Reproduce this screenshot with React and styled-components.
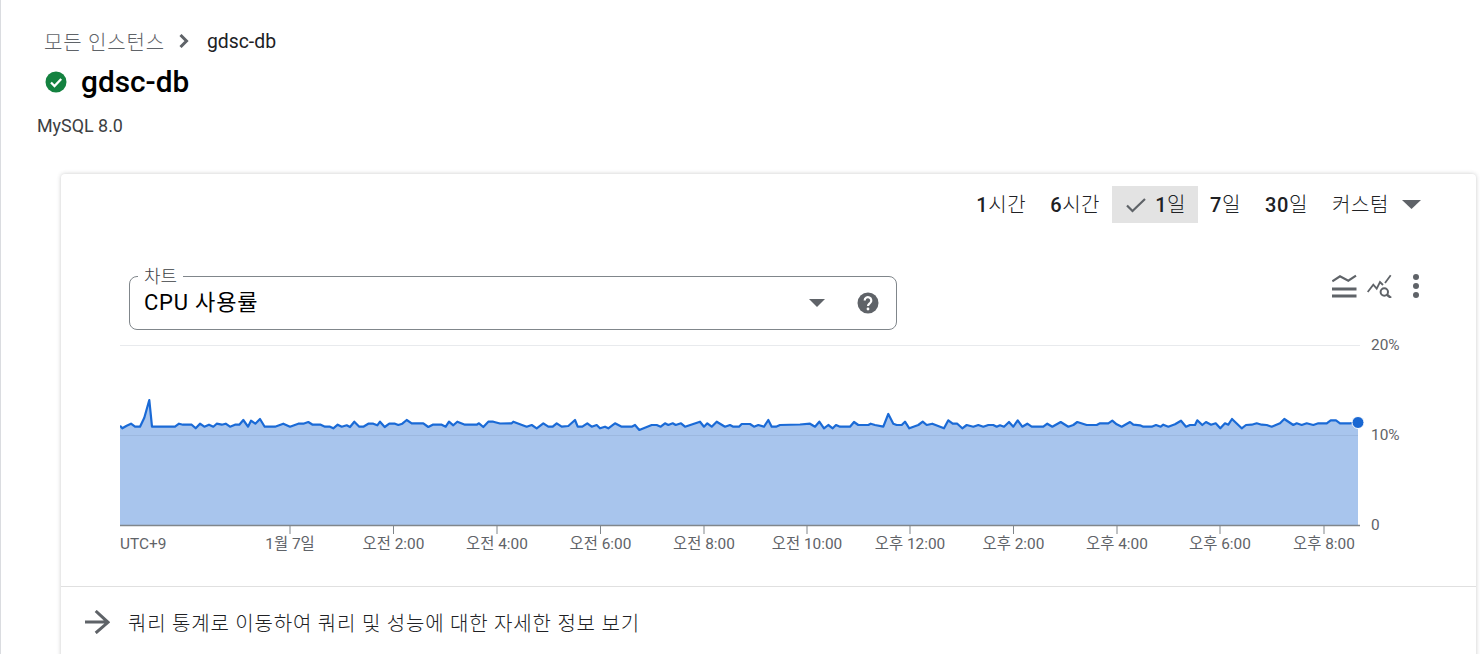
import React from 'react';
import styled, { createGlobalStyle } from 'styled-components';

const GlobalStyle = createGlobalStyle`
  html, body {
    margin: 0;
    height: 654px;
    overflow: hidden;
    background: #fff;
    font-family: Roboto, "Noto Sans CJK KR", sans-serif;
  }
`;

const Page = styled.div`
  height: 654px;
  overflow: hidden;
  border-left: 1px solid #dadce0;
  box-sizing: border-box;
`;

const Header = styled.header`
  display: flex;
  flex-direction: column;
  height: 174px;
  box-sizing: border-box;
  padding: 29px 0 0 36px;
`;

const Breadcrumb = styled.nav`
  display: flex;
  align-items: center;
  height: 24px;
  padding-left: 7px;
  font-size: 19.4px;
  color: #202124;
`;

const CrumbLink = styled.span`
  color: #5f6368;
  font-size: 20px;
  letter-spacing: 0.8px;
  font-weight: 300;
`;

const CrumbArrow = styled.svg`
  width: 12px;
  height: 14px;
  margin: 0 17px 0 13px;
`;

const TitleRow = styled.div`
  display: flex;
  align-items: center;
  gap: 14px;
  height: 36px;
  margin-top: 11px;
  padding-left: 8px;
`;

const Title = styled.h1`
  margin: 0 0 2px;
  font-size: 29.8px;
  font-weight: 500;
  color: #000;
`;

const Engine = styled.div`
  margin-top: 16px;
  font-size: 17.9px;
  line-height: 20px;
  color: #3c4043;
`;

const Card = styled.section`
  margin-left: 60px;
  width: 1415px;
  height: 520px;
  background: #fff;
  border-radius: 4px 4px 0 0;
  box-shadow: 0 0 4px rgba(60, 64, 67, 0.28);
`;

const RangeBar = styled.div`
  display: flex;
  justify-content: flex-end;
  align-items: center;
  padding: 12px 43px 0 0;
`;

const RangeTab = styled.button`
  display: flex;
  align-items: center;
  gap: 9px;
  height: 37px;
  padding: 0 12px;
  border: 0;
  background: ${p => (p.$active ? '#e3e3e3' : 'transparent')};
  font: inherit;
  font-size: 20px;
  font-weight: 300;
  letter-spacing: 0.6px;
  color: #202124;
`;

const RangeLabel = styled.span`
  margin-top: -3px;
`;

const RangeNum = styled.b`
  font-weight: 500;
`;

const Glyph = styled.svg`
  display: block;
  flex: none;
`;

const Controls = styled.div`
  display: flex;
  justify-content: space-between;
  align-items: flex-start;
  padding: 53px 53px 0 68px;
`;

const Select = styled.div`
  position: relative;
  display: flex;
  align-items: center;
  width: 768px;
  height: 54px;
  box-sizing: border-box;
  padding: 0 17px 0 14px;
  border: 1px solid #80868b;
  border-radius: 8px;
`;

const SelectLabel = styled.span`
  position: absolute;
  top: -10px;
  left: 8px;
  padding: 0 6px;
  background: #fff;
  font-size: 18px;
  line-height: 20px;
  font-weight: 300;
  color: #3c4043;
`;

const SelectValue = styled.span`
  flex: 1;
  margin-top: -7px;
  font-size: 22px;
  letter-spacing: 0.8px;
  color: #000;
`;

const SelectIcons = styled.div`
  display: flex;
  align-items: center;
  gap: 32px;
`;

const ChartIcons = styled.div`
  display: flex;
  align-items: center;
  gap: 10px;
  height: 24px;
  margin-top: -2px;
`;

const ChartWrap = styled.div`
  margin-left: 59px;
  height: 230px;
`;

const ChartSvg = styled.svg`
  display: block;
  width: 1300px;
  height: 230px;
  font-family: Roboto, "Noto Sans CJK KR", sans-serif;
`;

const AxisText = styled.text`
  font-size: 15.4px;
  fill: #5f6368;
`;

const Footer = styled.div`
  display: flex;
  align-items: center;
  gap: 18px;
  height: 70px;
  margin-top: 26px;
  padding-left: 23px;
  border-top: 1px solid #e0e0e0;
  font-size: 20px;
  font-weight: 300;
  letter-spacing: 0.8px;
  color: #202124;
`;

const linePoints = [
  [120, 425.7], [122.3, 428.3], [126.7, 425.7], [131, 423.7], [135, 426.7], [140, 426.7], [144.3, 417.7], [149.3, 400],
  [152, 426.7], [175, 426.7], [179, 423.7], [183, 424.7], [191.7, 424.7], [195.7, 428.3], [200, 423.7], [204.3, 426.7],
  [209, 424.7], [213.3, 426.7], [216.7, 423.7], [221.7, 424.7], [225.7, 423.7], [230, 426.7], [235, 424.7], [239.3, 424.7],
  [243.3, 420], [248, 426.7], [251, 420.7], [255.3, 423.7], [260, 419], [264.7, 426.7], [275, 426.7], [283.3, 423.7],
  [290, 426.7], [298.3, 423.7], [303.3, 423.7], [308.3, 422], [312.7, 424.7], [320.7, 424.7], [325, 426.7], [330, 426.7],
  [333.3, 428.3], [337.7, 424.7], [341.7, 426.7], [346.7, 425.3], [350, 427], [354.3, 421.7], [359.3, 426.7], [363.3, 426.7],
  [368.3, 423.7], [373.3, 423.7], [377.3, 425.3], [380, 421.7], [384.7, 427], [389.3, 423.7], [395, 423.7], [398.3, 425],
  [402.3, 423.7], [406.7, 420], [411.7, 423.3], [423.3, 423.3], [428.3, 427], [432.7, 424.7], [441.7, 424.7], [445.7, 426.7],
  [449, 421.7], [453.3, 425.3], [457.3, 421.7], [465, 424.7], [476.7, 424.7], [479, 423.3], [483.3, 427], [488.3, 421.7],
  [493.3, 421.7], [500, 423.5], [511.7, 423.3], [513.3, 421.7], [526.7, 426.7], [531.7, 425], [536.7, 428.3], [543.3, 423.3],
  [548.3, 426.7], [552.7, 426.7], [556.7, 423.3], [561.7, 426.7], [568.3, 426], [575, 420], [577.7, 426.7], [582.3, 426.7],
  [587.3, 423.3], [591.7, 426.7], [596.7, 425], [600, 428.3], [605, 426.7], [608.3, 428.3], [615, 423.3], [621.7, 426.7],
  [631.7, 426.7], [635, 425], [639.3, 430], [651.7, 425], [656.7, 425], [660.7, 426.7], [665, 423.3], [668.3, 425],
  [672.7, 423.3], [675.7, 425], [681, 423.3], [685, 426.7], [700, 421.7], [704, 426.7], [707.3, 423.3], [711.7, 426.7],
  [716.7, 421.7], [725, 426.7], [730, 425], [733.3, 426.7], [739, 426.7], [741.7, 424], [750, 424], [754, 426.7],
  [758.3, 425], [764, 426.7], [768.3, 420], [771.7, 426.7], [776, 426.7], [780, 425], [800, 424.5], [810, 423.7],
  [815, 426.7], [819.3, 421.7], [824, 428.3], [828.3, 425], [832.7, 428.3], [836, 425], [840, 426.7], [850, 426.7],
  [854, 422], [858.3, 425], [868.3, 425], [870.7, 423.7], [875, 425], [883.3, 426.7], [888.3, 414], [893.3, 423.7],
  [896.7, 425], [901.7, 425], [905, 421.7], [909.3, 428.3], [918.3, 425], [922.7, 421.7], [926.7, 425], [932.3, 423.7],
  [944, 428.3], [948.3, 420.3], [952.7, 423.7], [957.3, 423.7], [962.3, 428.3], [966.7, 425], [973.3, 426.7], [978.3, 425],
  [983.3, 426.7], [988.3, 425], [993.3, 425], [996.7, 426.7], [1000, 425.3], [1004, 426.7], [1009, 422], [1013.3, 426.7],
  [1017.7, 420.3], [1022.3, 426.7], [1027.3, 423.7], [1031.7, 426.7], [1043.3, 426.7], [1047.3, 423.7], [1052.3, 426.7],
  [1060.7, 422], [1068.3, 426.7], [1073.3, 425], [1077.3, 422], [1086.7, 425], [1096.7, 425], [1100, 423.3], [1108.3, 423.3],
  [1112.3, 420.7], [1116.7, 424.3], [1121.7, 426.7], [1130, 422], [1133.3, 424.7], [1140, 425.3], [1143.3, 426.7], [1151.7, 426.7],
  [1156, 425], [1160.7, 426.7], [1163.3, 424.7], [1168.3, 426.7], [1175, 424.3], [1181, 420.7], [1186, 426.7], [1190, 425],
  [1195, 425], [1197.3, 420.3], [1202.3, 425], [1206, 422], [1211, 424.7], [1215.7, 423.3], [1220.3, 428.3], [1225, 423.3],
  [1228.3, 424.7], [1232, 419], [1241.7, 428.3], [1246, 425], [1251.7, 424.7], [1256.7, 423.3], [1261.7, 424.7], [1266.7, 425],
  [1271.7, 426.7], [1280, 423.3], [1284.3, 419], [1293.3, 425], [1296.7, 423.3], [1301.7, 425], [1306.7, 423.3], [1313.3, 425],
  [1318.3, 423.3], [1326.7, 423.3], [1330.7, 420.3], [1336, 420.3], [1340, 423.3], [1350, 423.3], [1358, 422.3],
];

const ticks = [
  [290, '1월 7일'], [393.5, '오전 2:00'], [497, '오전 4:00'], [600.5, '오전 6:00'], [704, '오전 8:00'], [807, '오전 10:00'],
  [910, '오후 12:00'], [1013.5, '오후 2:00'], [1117, '오후 4:00'], [1220, '오후 6:00'], [1324, '오후 8:00'],
];

const line = linePoints.map(p => p.join(',')).join(' ');
const area = `120,525 ${line} 1358,525`;

function CpuChart() {
  return (
    <ChartSvg viewBox="120 330 1300 230">
      <line x1="120" x2="1360" y1="345.5" y2="345.5" stroke="#e8eaed" />
      <polygon points={area} fill="#a8c5ed" />
      <line x1="120" x2="1358" y1="435.5" y2="435.5" stroke="#9cb8df" />
      <polyline points={line} fill="none" stroke="#1a6ad6" strokeWidth="2.200" strokeLinejoin="round" />
      <circle cx="1358" cy="422.5" r="6" fill="#1967d2" stroke="#fff" />
      <line x1="120" x2="1360" y1="525.5" y2="525.5" stroke="#80868b" strokeWidth="1.5" />
      {ticks.map(([x, label]) => (
        <g key={label}>
          <line x1={x} x2={x} y1="525" y2="534" stroke="#80868b" />
          <AxisText x={x} y="549" textAnchor="middle">{label}</AxisText>
        </g>
      ))}
      <AxisText x="120" y="549">UTC+9</AxisText>
      <AxisText x="1371" y="350">20%</AxisText>
      <AxisText x="1371" y="440">10%</AxisText>
      <AxisText x="1371" y="530">0</AxisText>
    </ChartSvg>
  );
}

export default function App() {
  return (
    <Page>
      <GlobalStyle />
      <Header>
        <Breadcrumb>
          <CrumbLink>모든 인스턴스</CrumbLink>
          <CrumbArrow viewBox="0 0 12 14">
            <path d="M2.500 1 8.500 7 2.500 13" fill="none" stroke="#5f6368" strokeWidth="3" />
          </CrumbArrow>
          gdsc-db
        </Breadcrumb>
        <TitleRow>
          <svg width="22" height="22" viewBox="0 0 22 22">
            <circle cx="11" cy="11" r="10.500" fill="#148240" />
            <path d="M6 11.500l3.500 3.500L16.200 8" fill="none" stroke="#fff" strokeWidth="2.300" />
          </svg>
          <Title>gdsc-db</Title>
        </TitleRow>
        <Engine>MySQL 8.0</Engine>
      </Header>

      <Card>
        <RangeBar>
          <RangeTab><RangeLabel><RangeNum>1</RangeNum>시간</RangeLabel></RangeTab>
          <RangeTab><RangeLabel><RangeNum>6</RangeNum>시간</RangeLabel></RangeTab>
          <RangeTab $active>
            <Glyph width="22" height="16" viewBox="0 0 22 16">
              <path d="M3 8.500 8.500 14 21 2" fill="none" stroke="#5f6368" strokeWidth="2.200" />
            </Glyph>
            <RangeLabel><RangeNum>1</RangeNum>일</RangeLabel>
          </RangeTab>
          <RangeTab><RangeLabel><RangeNum>7</RangeNum>일</RangeLabel></RangeTab>
          <RangeTab><RangeLabel><RangeNum>30</RangeNum>일</RangeLabel></RangeTab>
          <RangeTab>
            <RangeLabel>커스텀</RangeLabel>
            <Glyph width="19" height="9" viewBox="0 0 19 9" style={{ marginLeft: 4 }}>
              <path d="M0 0h19L9.500 9z" fill="#5f6368" />
            </Glyph>
          </RangeTab>
        </RangeBar>

        <Controls>
          <Select>
            <SelectLabel>차트</SelectLabel>
            <SelectValue>CPU 사용률</SelectValue>
            <SelectIcons>
              <Glyph width="16" height="8" viewBox="0 0 16 8">
                <path d="M0 0h16L8 8z" fill="#5f6368" />
              </Glyph>
              <Glyph width="22" height="22" viewBox="0 0 22 22">
                <circle cx="11" cy="11" r="10.500" fill="#5f6368" />
                <path d="M7.700 8.500a3.300 3.300 0 1 1 5.400 2.500c-1.200 1-2.100 1.500-2.100 3" fill="none" stroke="#fff" strokeWidth="2.200" />
                <circle cx="11" cy="17" r="1.400" fill="#fff" />
              </Glyph>
            </SelectIcons>
          </Select>
          <ChartIcons>
            <svg width="25" height="24" viewBox="0 0 25 24">
              <path d="M0.300 7.300 8 2.300l8.300 4.400L24 1.700" fill="none" stroke="#5f6368" strokeWidth="2.200" />
              <path d="M0 15h24.500M0 22h24.500" stroke="#5f6368" strokeWidth="3" />
            </svg>
            <svg width="26" height="24" viewBox="0 0 26 24">
              <path d="M0.700 18 6.300 10.700l3.400 4L13 8l3 3M18 9l5.700-7.700" fill="none" stroke="#5f6368" strokeWidth="1.800" />
              <circle cx="17.300" cy="18" r="3.700" fill="none" stroke="#5f6368" strokeWidth="2" />
              <path d="M20 20.700 24 24" stroke="#5f6368" strokeWidth="2.400" />
            </svg>
            <svg width="14" height="24" viewBox="0 0 14 24" style={{ marginLeft: 6 }}>
              <circle cx="7" cy="3" r="3" fill="#5f6368" />
              <circle cx="7" cy="12" r="3" fill="#5f6368" />
              <circle cx="7" cy="21" r="3" fill="#5f6368" />
            </svg>
          </ChartIcons>
        </Controls>

        <ChartWrap>
          <CpuChart />
        </ChartWrap>

        <Footer>
          <svg width="26" height="24" viewBox="0 0 26 24">
            <path d="M1 12h22M11.700 1 24 12.300 11.700 23" fill="none" stroke="#5f6368" strokeWidth="3" />
          </svg>
          쿼리 통계로 이동하여 쿼리 및 성능에 대한 자세한 정보 보기
        </Footer>
      </Card>
    </Page>
  );
}
